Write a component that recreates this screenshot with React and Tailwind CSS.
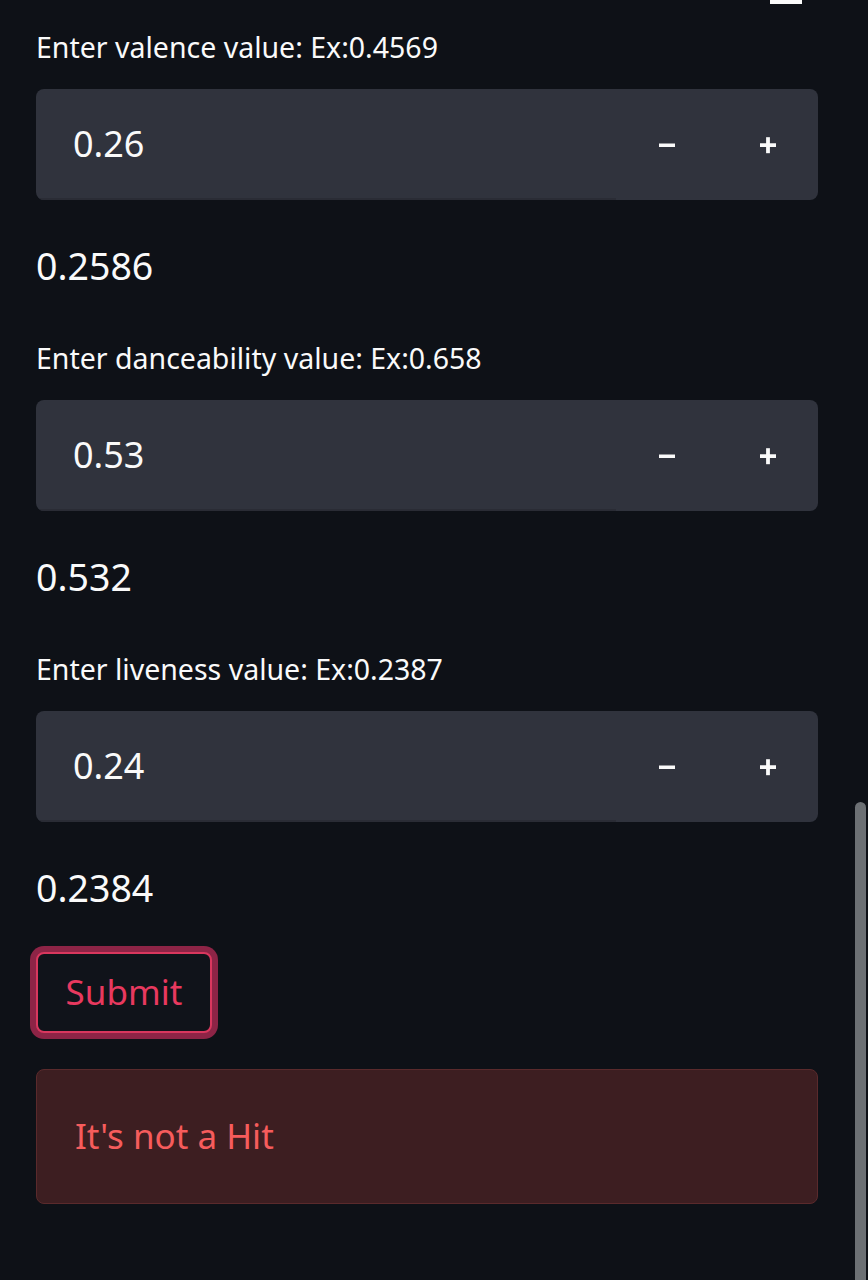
import React from 'react';

const fields = [
  { label: 'Enter valence value: Ex:0.4569', value: '0.26', result: '0.2586' },
  { label: 'Enter danceability value: Ex:0.658', value: '0.53', result: '0.532' },
  { label: 'Enter liveness value: Ex:0.2387', value: '0.24', result: '0.2384' },
];

function MinusIcon() {
  return (
    <svg width="20" height="20" viewBox="0 0 20 20">
      <rect x="2" y="8.5" width="16" height="3.5" fill="#fafafa" />
    </svg>
  );
}

function PlusIcon() {
  return (
    <svg width="20" height="20" viewBox="0 0 20 20">
      <rect x="2" y="8.25" width="16" height="3.75" fill="#fafafa" />
      <rect x="8.1" y="2.2" width="3.8" height="16" fill="#fafafa" />
    </svg>
  );
}

function NumberField({ label, value, result, first }) {
  return (
    <div className={first ? '' : 'mt-[52px]'}>
      <div className="h-[40px] flex items-center text-[28.5px] text-[#fafafa]">{label}</div>
      <div className="mt-[22px] h-[111px] flex rounded-lg bg-[#30333d] overflow-hidden">
        <div className="flex-1 flex items-center pl-[37px] text-[36px] text-[#fafafa] border-b-2 border-[#2a2c35]">
          {value}
        </div>
        <button className="w-[101px] flex items-center justify-center">
          <MinusIcon />
        </button>
        <button className="w-[101px] flex items-center justify-center">
          <PlusIcon />
        </button>
      </div>
      <div className="mt-[46px] h-[40px] flex items-center text-[37.5px] text-[#fafafa]">{result}</div>
    </div>
  );
}

export default function App() {
  return (
    <div
      className="relative min-h-[1280px] bg-[#0e1117] overflow-hidden"
      style={{ fontFamily: '"Noto Sans", "Open Sans", sans-serif' }}
    >
      {/* header menu icon peeking in */}
      <div className="absolute top-0 left-[770px] w-[32px] h-[4px] bg-[#fafafa]" />
      {/* scrollbar thumb */}
      <div className="absolute top-[802px] left-[855px] w-[11px] h-[490px] rounded-t-full bg-[#6c7074]" />

      <div className="pt-[27px] pl-[36px] pr-[50px]">
        {fields.map((f, i) => (
          <NumberField key={f.label} {...f} first={i === 0} />
        ))}

        <div className="mt-[44px]">
          <button className="h-[81px] w-[176px] rounded-[8px] border-2 border-[#d9375e] bg-[#10131a] text-[35px] text-[#e8395f] shadow-[0_0_0_6px_#8d2446]">
            Submit
          </button>
        </div>

        <div className="mt-[36px] h-[135px] flex items-center pl-[38px] rounded-lg bg-[#3d1e21] border border-[#5a2a2c] text-[35px] text-[#f65c5c]">
          It's not a Hit
        </div>
      </div>
    </div>
  );
}
